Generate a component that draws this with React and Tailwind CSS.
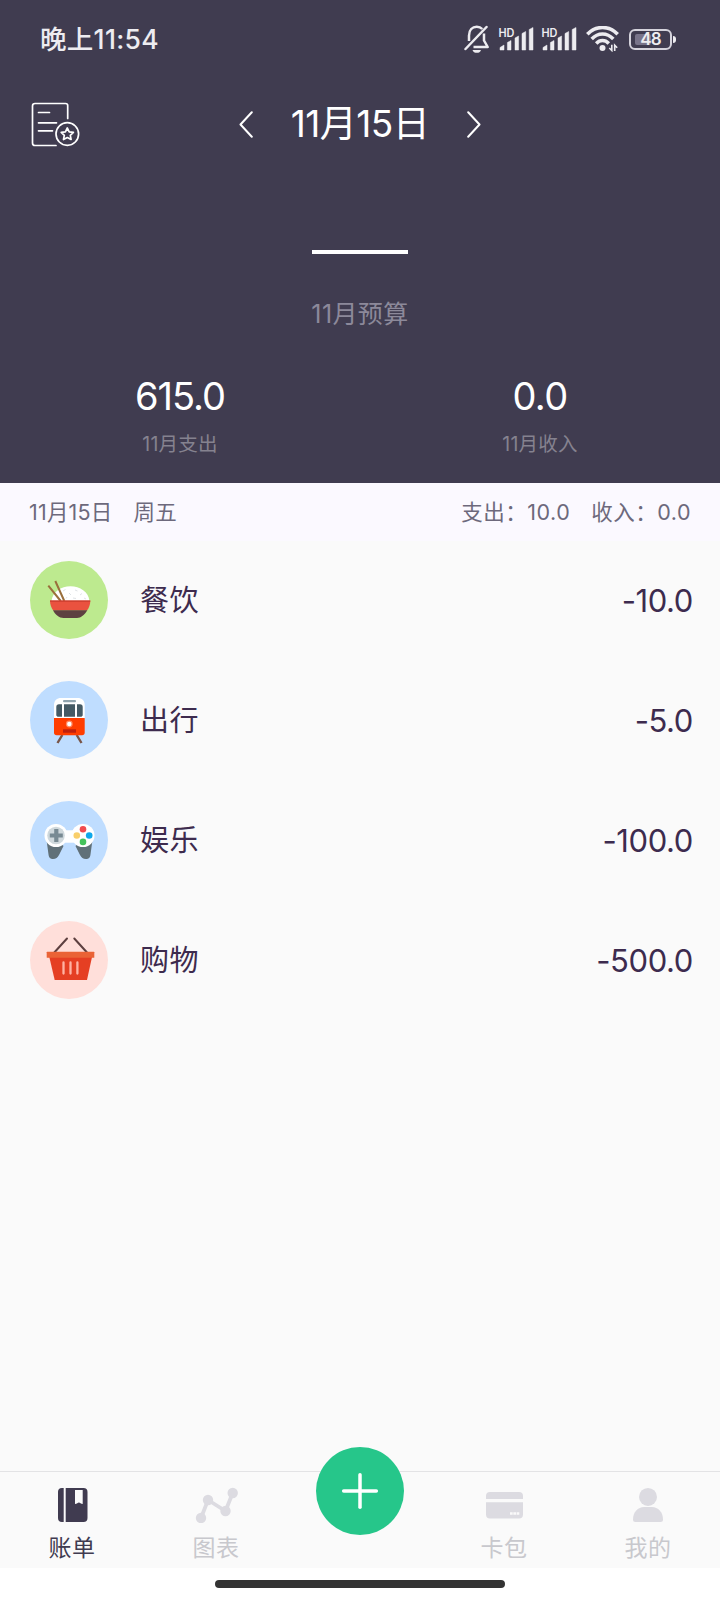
import { Plus } from "lucide-react";

const RECORDS = [
  { id: "food", label: "餐饮", amount: "-10.0", bg: "bg-[#bdea8f]", icon: BowlIcon },
  { id: "travel", label: "出行", amount: "-5.0", bg: "bg-[#bfddff]", icon: TrainIcon },
  { id: "fun", label: "娱乐", amount: "-100.0", bg: "bg-[#bfddff]", icon: GamepadIcon },
  { id: "shopping", label: "购物", amount: "-500.0", bg: "bg-[#ffdfda]", icon: BasketIcon },
];

function BowlIcon() {
  return (
    <svg viewBox="0 0 78 78" className="size-[78px]">
      <path d="M21.5 40C22.5 31 31 25.3 40.5 25.3S58.500 31 59.500 40Z" fill="#fff" />
      <path d="M33 30l2.500-1.500M39 32l2 2M45 29l2.500 1M50 34l2-1.500M43 37l3 .5M54 37l2 1M37 36l-1 1.500" stroke="#dfe3e6" strokeWidth="1" />
      <path d="M18.300 24.700L30.700 40M25.300 20L34.300 40" stroke="#9a6f3c" strokeWidth="2" />
      <path d="M20 39.500H60.300C60.300 43.500 59 47 57 49.500H23.300C21.300 47 20 43.500 20 39.500Z" fill="#ea523f" />
      <path d="M20 39.500H60.300V40.700H20Z" fill="#c83d2e" />
      <path d="M23 49.300H57.300C54.500 54 51 57 47 57H33.500C29 57 25.500 54 23 49.300Z" fill="#5d4141" />
    </svg>
  );
}

function TrainIcon() {
  return (
    <svg viewBox="0 0 78 78" className="size-[78px]">
      <path d="M32.300 54L27.500 62M46.700 54L51.500 62" stroke="#795548" strokeWidth="2.400" />
      <path d="M24 38V24C24 19.500 27 17 31 17H47.700C51.700 17 54.700 19.500 54.700 24V38Z" fill="#fff" />
      <path d="M24 37H54.700V51.500Q54.700 54.200 52 54.200H26.700Q24 54.200 24 51.500Z" fill="#ff3d00" />
      <rect x="33" y="19" width="13" height="2.200" rx="1" fill="#90a4ae" />
      <path d="M32 23.300V35.700H27.500L26.300 34.500V26Q26.300 23.300 29 23.300ZM34 23.300H45V35.700H34ZM47 23.300H50Q52.700 23.300 52.700 26V34.500L51.500 35.700H47Z" fill="#455a64" />
      <circle cx="39.300" cy="43" r="3.400" fill="#ff8a65" />
      <circle cx="39.300" cy="43" r="2.200" fill="#fff" />
      <rect x="33" y="48.300" width="13" height="3.400" fill="#bf1f0c" />
    </svg>
  );
}

function GamepadIcon() {
  return (
    <svg viewBox="0 0 78 78" className="size-[78px]">
      <path d="M16.800 41L18.500 53.500C19 57 20.500 58 23 58C26 58 27.500 56.500 29 54L33.500 45L30 41ZM62.200 41L60.500 53.500C60 57 58.500 58 56 58C53 58 51.500 56.500 50 54L45.500 45L49 41Z" fill="#607078" />
      <circle cx="26" cy="34.500" r="11.500" fill="#fff" />
      <circle cx="53" cy="34.500" r="11.500" fill="#fff" />
      <path d="M34 29.300H45V41.700H34Z" fill="#fff" />
      <circle cx="26" cy="34.500" r="8.800" fill="#cfd8dc" />
      <path d="M26.300 28V41M19.800 34.500H32.800" stroke="#788a93" strokeWidth="4.200" />
      <circle cx="53" cy="28.300" r="3.300" fill="#f14b4f" />
      <circle cx="46.800" cy="34.500" r="3.300" fill="#f9cf6b" />
      <circle cx="59.200" cy="34.500" r="3.300" fill="#0fa8ea" />
      <circle cx="53" cy="40.900" r="3.300" fill="#45c35c" />
    </svg>
  );
}

function BasketIcon() {
  return (
    <svg viewBox="0 0 78 78" className="size-[78px]">
      <path d="M24.300 31.500L37 17.500M57 31.500L44.300 17.500" stroke="#5d4040" strokeWidth="2" strokeLinecap="round" />
      <path d="M19.300 36H62L57 59H24.700Z" fill="#e53f23" />
      <rect x="16.700" y="30.700" width="47.600" height="6" rx=".5" fill="#ea6336" />
      <path d="M33.500 41.500V52.500M40.500 41.500V52.500M47.400 41.500V52.500" stroke="#ffb3a3" strokeWidth="2.300" strokeLinecap="round" />
    </svg>
  );
}

function MuteBell() {
  return (
    <svg viewBox="0 0 26 28" className="w-[26px] h-[28px]" fill="none" stroke="#edecf0" strokeWidth="2.500">
      <path d="M5 16V10.500C5 5 8.300 1.700 12.800 1.700C15 1.700 17 2.600 18.300 4M20 8.500V15.500L23.700 22H9.500" strokeLinejoin="round" />
      <path d="M1.500 24L22.500 2" strokeLinecap="round" />
      <path d="M8.500 25H17C16.500 27 14.800 27.800 12.800 27.800S9 27 8.500 25Z" fill="#edecf0" stroke="none" />
    </svg>
  );
}

function Signal() {
  return (
    <svg viewBox="0 0 36 28" className="w-[36px] h-[28px]" fill="#edecf0">
      <text x=".5" y="11.500" fontSize="11.500" fontWeight="600" textLength="16" lengthAdjust="spacingAndGlyphs">HD</text>
      <path d="M2 25V22.500L6 20V25ZM9.400 25V17.500L13 15.500V25ZM17 25V13L20.600 11V25ZM24 25V8.500L27.700 6.500V25ZM31.200 25V4.500L35 2.500V25Z" stroke="#edecf0" strokeWidth=".5" strokeLinejoin="round" />
    </svg>
  );
}

function Wifi() {
  return (
    <svg viewBox="0 0 33 26" className="w-[33px] h-[26px]" fill="none" stroke="#edecf0">
      <path d="M1.300 8.300C10 -.8 23 -.8 31.700 8.300M5.700 13C12 6.300 21 6.300 27.300 13M10.200 17.500C14 13.600 19 13.600 22.800 17.500" strokeWidth="3.500" />
      <circle cx="16.500" cy="22" r="3" fill="#edecf0" stroke="none" />
      <path d="M25.800 18.800V24.500L23.300 22M28.700 25V19.300L31.200 21.800" strokeWidth="1.600" />
    </svg>
  );
}

function Battery() {
  return (
    <div className="flex items-center gap-px">
      <div className="relative flex h-[21px] w-[43px] items-center justify-center rounded-[6px] border-2 border-[#d5d3dc]">
        <div className="absolute left-[4px] top-[3px] h-[11px] w-[16px] rounded-[2px] bg-[#79748a]" />
        <span className="relative text-[17px] font-semibold leading-none tracking-[-0.8px] text-[#edecf0]">48</span>
      </div>
      <div className="h-[7px] w-[3px] rounded-r-full bg-[#edecf0]" />
    </div>
  );
}

function Chevron({ flip }) {
  return (
    <svg viewBox="0 0 14 27" className={flip ? "w-[14px] h-[27px] rotate-180" : "w-[14px] h-[27px]"} fill="none" stroke="#fff" strokeWidth="2">
      <path d="M12.800 1.200L1.500 13.500L12.800 25.800" strokeLinecap="round" strokeLinejoin="round" />
    </svg>
  );
}

function BillStarIcon() {
  return (
    <svg viewBox="0 0 49 45" className="w-[49px] h-[45px]" fill="none" stroke="#fff" strokeWidth="1.700" strokeLinecap="round" strokeLinejoin="round">
      <path d="M36.700 16.500V3.500Q36.700 1.500 34.500 1.500H4Q1.500 1.500 1.500 4V41Q1.500 43.500 4 43.500H25" />
      <path d="M7.500 10.500H18.500M7.500 20.800H25.500M7.500 28.800H21.500" />
      <circle cx="36.300" cy="32" r="11.300" />
      <path d="M36.300 26L38.200 29.800L42.400 30.400L39.300 33.300L40.100 37.500L36.300 35.500L32.500 37.500L33.300 33.300L30.200 30.400L34.400 29.800Z" />
    </svg>
  );
}

function BookIcon() {
  return (
    <svg viewBox="0 0 44 36" className="w-[44px] h-[36px]" fill="#403b50">
      <path d="M12 1H13.700V35H12Q8 35 8 31V5Q8 1 12 1ZM15.700 1H33.500Q37.500 1 37.500 5V31Q37.500 35 33.500 35H15.700Z" />
      <path d="M25 3H32.700V17Q31.500 17 30.500 16.200Q28.900 14.800 27.300 16.200Q26.300 17 25 17Z" fill="#fafafa" />
    </svg>
  );
}

function ChartIcon() {
  return (
    <svg viewBox="0 0 44 36" className="w-[44px] h-[36px]" fill="#dcdbe1">
      <path d="M7 31L14 13L31.500 24L38.700 6" fill="none" stroke="#dcdbe1" strokeWidth="3.800" />
      <circle cx="7" cy="31" r="5.200" />
      <circle cx="14" cy="13" r="5.200" />
      <circle cx="31.500" cy="24" r="5.200" />
      <circle cx="38.700" cy="6" r="5.200" />
    </svg>
  );
}

function CardIcon() {
  return (
    <svg viewBox="0 0 44 36" className="w-[44px] h-[36px]" fill="#dcdbe1">
      <path d="M4 12V9Q4 5 8 5H37Q41 5 41 9V12ZM4 15.300H41V27.500Q41 31.500 37 31.500H8Q4 31.500 4 27.500Z" />
      <path d="M28 26.500H37.500" stroke="#fafafa" strokeWidth="2.600" strokeDasharray="2.700 .6" />
    </svg>
  );
}

function UserIcon() {
  return (
    <svg viewBox="0 0 44 36" className="w-[44px] h-[36px]" fill="#dcdbe1">
      <circle cx="22" cy="9.900" r="9" />
      <path d="M7 32.500C7 25 12 20.100 18 20.100H26C32 20.100 37 25 37 32.500Q37 35 34.500 35H9.500Q7 35 7 32.500Z" />
    </svg>
  );
}

function Tab({ icon: Icon, label, active }) {
  return (
    <div className="flex flex-1 flex-col items-center pt-[15px]">
      <Icon />
      <span className={`mt-[10px] text-[23px] leading-[30px] tracking-[0.6px] ${active ? "text-[#403b50]" : "text-[#c8c8cd]"}`}>
        {label}
      </span>
    </div>
  );
}

export default function App() {
  return (
    <div className="flex h-[1600px] w-[720px] flex-col overflow-hidden bg-[#fafafa] font-['Inter','Noto_Sans_CJK_SC',sans-serif]">
      <header className="flex h-[483px] flex-col bg-[#403c50] text-white">
        {/* Status bar */}
        <div className="flex h-[78px] items-center justify-between pl-[40px] pr-[44px] text-[#edecf0]">
          <span className="text-[26.5px] font-medium leading-[36px] tracking-[0.3px]">晚上11:54</span>
          <div className="flex items-center">
            <MuteBell />
            <div className="ml-[8px] flex gap-[7px]">
              <Signal />
              <Signal />
            </div>
            <div className="ml-[9px]"><Wifi /></div>
            <div className="ml-[10px]"><Battery /></div>
          </div>
        </div>

        {/* Date switcher */}
        <div className="grid h-[92px] grid-cols-[160px_1fr_160px] items-center px-[31px]">
          <BillStarIcon />
          <div className="flex items-center justify-between pl-[48px] pr-[48px]">
            <Chevron />
            <h1 className="whitespace-nowrap text-[37px] leading-[48px] tracking-[-0.5px]">11月15日</h1>
            <Chevron flip />
          </div>
        </div>

        {/* Budget */}
        <div className="flex flex-col items-center pt-[80px]">
          <div className="h-[4px] w-[96px] bg-white" />
          <p className="mt-[42px] text-[25px] leading-[36px] tracking-[0.4px] text-[#8c899a]">11月预算</p>
        </div>

        <div className="mt-[41px] grid grid-cols-2 text-center">
          <div>
            <p className="text-[38px] leading-[46px] tracking-[-1px]">615.0</p>
            <p className="mt-[11px] text-[19.5px] leading-[28px] tracking-[0.2px] text-[#85828f]">11月支出</p>
          </div>
          <div>
            <p className="text-[38px] leading-[46px] tracking-[-0.6px]">0.0</p>
            <p className="mt-[11px] text-[19.5px] leading-[28px] tracking-[0.2px] text-[#85828f]">11月收入</p>
          </div>
        </div>
      </header>

      <div className="flex h-[58px] items-center justify-between bg-[#fbf9ff] pb-px pl-[29px] pr-[29px] text-[21.5px] leading-[32px] text-[#6d697c]">
        <div className="flex gap-[21px]">
          <span className="tracking-[0.2px]">11月15日</span>
          <span className="tracking-[0.2px]">周五</span>
        </div>
        <div className="flex gap-[21px]">
          <span className="tracking-[0.5px]">支出：10.0</span>
          <span className="tracking-[0.5px]">收入：0.0</span>
        </div>
      </div>

      <ul className="-mt-px flex-1">
        {RECORDS.map(({ id, label, amount, bg, icon: Icon }) => (
          <li key={id} className="flex h-[120px] items-center pl-[30px] pr-[27px] text-[#3d2b4e]">
            <div className={`size-[78px] rounded-full ${bg}`}>
              <Icon />
            </div>
            <span className="ml-[32px] pt-[2px] text-[29px] leading-[40px] tracking-[0.5px]">{label}</span>
            <span className="ml-auto pt-px text-[31px] leading-[40px] tracking-[-0.4px]">{amount}</span>
          </li>
        ))}
      </ul>

      {/* Tab bar */}
      <nav className="flex h-[97px] border-t border-[#e3e3e5]">
        <Tab icon={BookIcon} label="账单" active />
        <Tab icon={ChartIcon} label="图表" />
        <div className="flex flex-1 justify-center">
          <button className="-mt-[25px] flex size-[88px] items-center justify-center rounded-full bg-[#26c68a] text-white">
            <Plus size={56} strokeWidth={1.5} />
          </button>
        </div>
        <Tab icon={CardIcon} label="卡包" />
        <Tab icon={UserIcon} label="我的" />
      </nav>
      <div className="flex h-[32px] justify-center bg-white pt-[12px]">
        <div className="h-[8px] w-[290px] rounded-full bg-[#333]" />
      </div>
    </div>
  );
}
